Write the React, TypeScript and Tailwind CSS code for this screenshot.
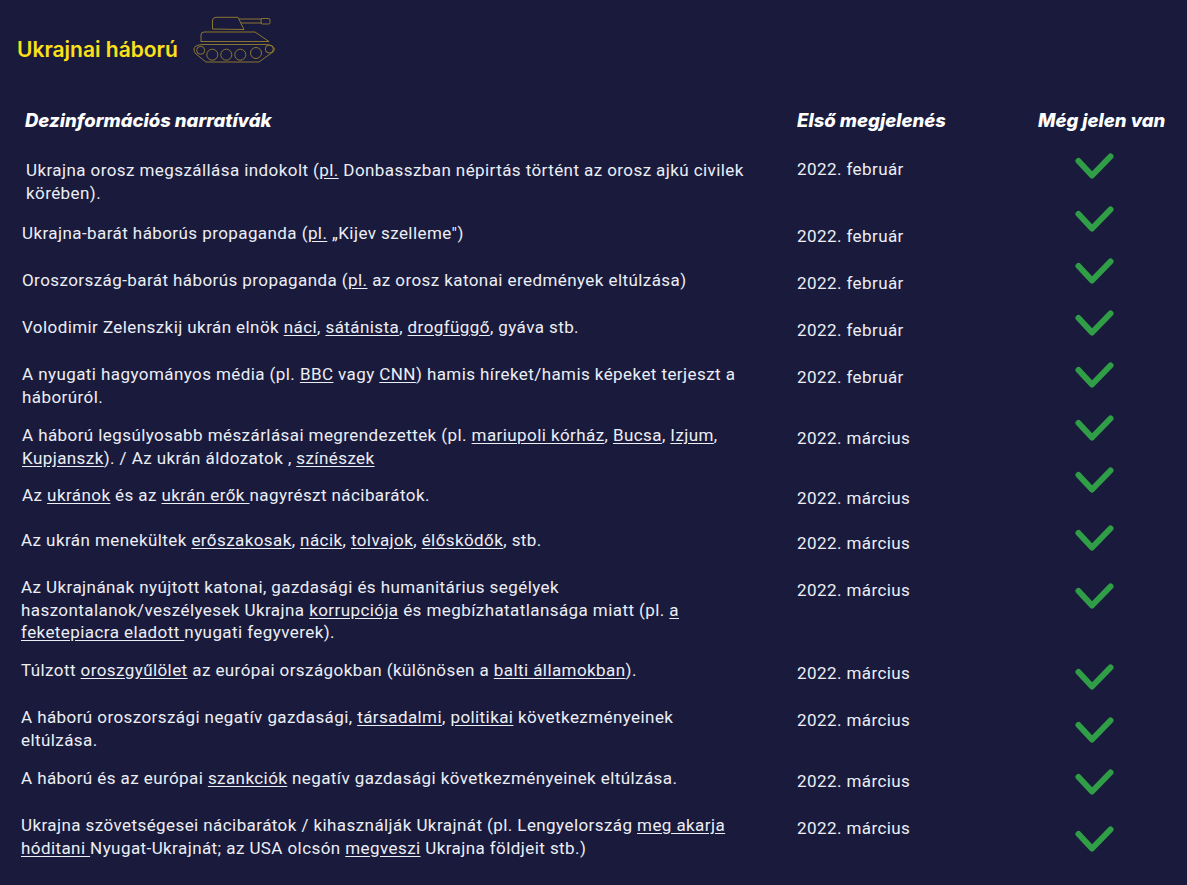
import React from "react";

const U = ({ children }: { children: React.ReactNode }) => <span className="underline underline-offset-2">{children}</span>;

const Check = () => (
  <svg width="40" height="30" viewBox="0 0 40 30" className="block">
    <path d="M4.5 9 L18 23.5 L36.5 4.5" fill="none" stroke="#2f9e47" strokeWidth="6" strokeLinecap="round" strokeLinejoin="round" />
  </svg>
);

const Tank = () => (
  <svg width="120" height="70" viewBox="0 0 120 70" className="block" fill="none" stroke="#97802f" strokeWidth="0.9">
    <path d="M42.5 26 V17 Q43 14.5 46 14.3 H68 L74 26.5 Z" />
    <path d="M69 16 H92 M71 20 H92" />
    <rect x="91" y="15.5" width="9" height="5.5" rx="1.5" />
    <path d="M31 39 V32 Q31 29 34 29 H85 L99 38.5 H31" />
    <path d="M33 41.5 H95 Q104 42 104.5 46 Q104.5 49 100 51 L89 59 H36 L26 51 Q24 49 24 46 Q24 42 33 41.5 Z" />
    <circle cx="30.7" cy="47.3" r="4" />
    <circle cx="42.3" cy="51.7" r="5.5" />
    <circle cx="56.3" cy="51.7" r="5.5" />
    <circle cx="70.3" cy="51.7" r="5.5" />
    <circle cx="86" cy="50" r="5.5" />
    <circle cx="99.3" cy="46" r="4" />
  </svg>
);

type Row = { h: string; t: string; d: string; c: string; date: string; text: React.ReactNode };

const F = "2022. február";
const M = "2022. március";

const rows: Row[] = [
  { h: "h-[52px]", t: "pt-[8px] pl-[26px]", d: "pt-[7px]", c: "pt-[1px]", date: F, text: <>Ukrajna orosz megszállása indokolt (<U>pl.</U> Donbasszban népirtás történt az orosz ajkú civilek<br />körében).</> },
  { h: "h-[53px]", t: "pt-[19px] pl-[22px]", d: "pt-[22px]", c: "pt-[2px]", date: F, text: <>Ukrajna-barát háborús propaganda (<U>pl.</U> „Kijev szelleme")</> },
  { h: "h-[52px]", t: "pt-[13px] pl-[22px]", d: "pt-[16px]", c: "pt-[1px]", date: F, text: <>Oroszország-barát háborús propaganda (<U>pl.</U> az orosz katonai eredmények eltúlzása)</> },
  { h: "h-[52px]", t: "pt-[8px] pl-[22px]", d: "pt-[11px]", c: "pt-[1px]", date: F, text: <>Volodimir Zelenszkij ukrán elnök <U>náci</U>, <U>sátánista</U>, <U>drogfüggő</U>, gyáva stb.</> },
  { h: "h-[54px]", t: "pt-[3px] pl-[22px]", d: "pt-[6px]", c: "pt-[1px]", date: F, text: <>A nyugati hagyományos média (pl. <U>BBC</U> vagy <U>CNN</U>) hamis híreket/hamis képeket terjeszt a<br />háborúról.</> },
  { h: "h-[51px]", t: "pt-[10px] pl-[22px]", d: "pt-[13px]", c: "pt-0", date: M, text: <>A háború legsúlyosabb mészárlásai megrendezettek (pl. <U>mariupoli kórház</U>, <U>Bucsa</U>, <U>Izjum</U>,<br /><U>Kupjanszk</U>). / Az ukrán áldozatok , <U>színészek</U></> },
  { h: "h-[56px]", t: "pt-[19px] pl-[22px]", d: "pt-[22px]", c: "pt-[1px]", date: M, text: <>Az <U>ukránok</U> és az <U>ukrán erők </U>nagyrészt nácibarátok.</> },
  { h: "h-[53px]", t: "pt-[8px] pl-[21px]", d: "pt-[11px]", c: "pt-[3px]", date: M, text: <>Az ukrán menekültek <U>erőszakosak</U>, <U>nácik</U>, <U>tolvajok</U>, <U>élősködők</U>, stb.</> },
  { h: "h-[82px]", t: "pt-[2px] pl-[21px]", d: "pt-[5px]", c: "pt-[8px]", date: M, text: <>Az Ukrajnának nyújtott katonai, gazdasági és humanitárius segélyek<br />haszontalanok/veszélyesek Ukrajna <U>korrupciója</U> és megbízhatatlansága miatt (pl. <U>a</U><br /><U>feketepiacra eladott </U>nyugati fegyverek).</> },
  { h: "h-[46px]", t: "pt-[3px] pl-[21px]", d: "pt-[6px]", c: "pt-[7px]", date: M, text: <>Túlzott <U>oroszgyűlölet</U> az európai országokban (különösen a <U>balti államokban</U>).</> },
  { h: "h-[60px]", t: "pt-[4px] pl-[21px]", d: "pt-[7px]", c: "pt-[14px]", date: M, text: <>A háború oroszországi negatív gazdasági, <U>társadalmi</U>, <U>politikai</U> következményeinek<br />eltúlzása.</> },
  { h: "h-[47px]", t: "pt-[5px] pl-[21px]", d: "pt-[8px]", c: "pt-[6px]", date: M, text: <>A háború és az európai <U>szankciók</U> negatív gazdasági következményeinek eltúlzása.</> },
  { h: "h-[70px]", t: "pt-[5px] pl-[21px]", d: "pt-[8px]", c: "pt-[16px]", date: M, text: <>Ukrajna szövetségesei nácibarátok / kihasználják Ukrajnát (pl. Lengyelország <U>meg akarja</U><br /><U>hóditani </U>Nyugat-Ukrajnát; az USA olcsón <U>megveszi</U> Ukrajna földjeit stb.)</> },
];

export default function App() {
  return (
    <div className="w-[1187px] h-[885px] overflow-hidden bg-[#1a1b3c] text-[#eceef5] text-[17px] tracking-[0.42px] leading-[22.5px] font-['Roboto',sans-serif]">
      <div className="flex items-center h-[75px] pl-[17px]">
        <div className="text-[#fde01a] text-[21px] tracking-normal font-semibold font-['Inter',sans-serif] w-[153px] whitespace-nowrap mt-[26px]">Ukrajnai háború</div>
        <Tank />
      </div>
      <div className="flex h-[76px] pt-[34px] text-white text-[18.5px] tracking-normal font-extrabold italic font-['Inter',sans-serif] whitespace-nowrap">
        <div className="w-[797px] pl-[25px]">Dezinformációs narratívák</div>
        <div className="w-[241px]">Első megjelenés</div>
        <div>Még jelen van</div>
      </div>
      {rows.map((r, i) => (
        <div key={i} className={`flex ${r.h} whitespace-nowrap`}>
          <div className={`w-[797px] ${r.t}`}>{r.text}</div>
          <div className={`w-[277px] ${r.d}`}>{r.date}</div>
          <div className={r.c}><Check /></div>
        </div>
      ))}
    </div>
  );
}
